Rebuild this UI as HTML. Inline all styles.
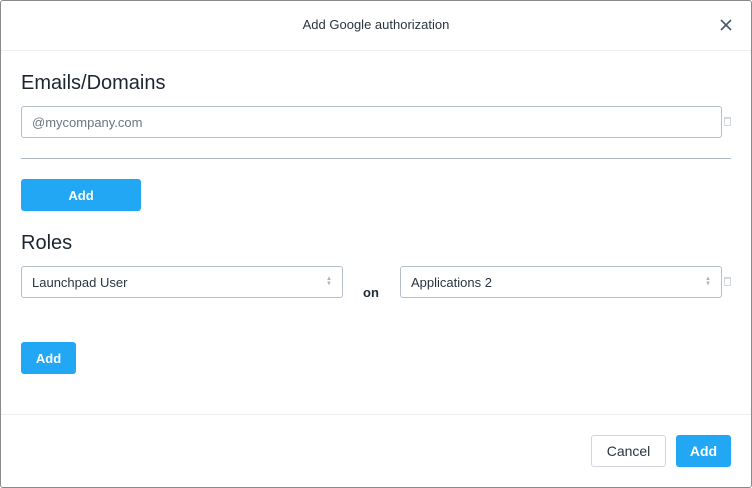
<!DOCTYPE html>
<html><head><style>
*{box-sizing:border-box;margin:0;padding:0}
body{width:752px;height:488px;background:#fff;font-family:"Liberation Sans",sans-serif;color:#1f2a36;position:relative;overflow:hidden}
.frame{position:absolute;left:0;top:0;width:752px;height:488px;border:1px solid #8a8a8a;border-radius:3px}
.a{position:absolute}
.hd{left:1px;top:50px;width:750px;height:1px;background:#eceff2}
.ft{left:1px;top:414px;width:750px;height:1px;background:#eceff2}
.title{left:0;width:752px;top:17px;text-align:center;font-size:13px;color:#2b3540}
h2{position:absolute;font-weight:normal;font-size:20px;color:#1c2530}
.inp{border:1px solid #b5bfca;border-radius:3px;font-size:13px;padding-left:10px;display:flex;align-items:center}
.btn{background:#22a7f5;color:#fff;font-weight:bold;font-size:13px;border-radius:3px;display:flex;align-items:center;justify-content:center}
.arr{position:absolute;right:10px;top:10px;font-size:6px;color:#aab3bc;line-height:5px}
.trash{width:7px;height:9px;border:1px solid #d3d8dd;border-top-width:2px}
</style></head><body>
<div class="frame"></div>
<div class="a title">Add Google authorization</div>
<svg class="a" style="left:720px;top:19px" width="12" height="12" viewBox="0 0 12 12"><path d="M1 1L11 11M11 1L1 11" stroke="#4a5866" stroke-width="1.6" fill="none"/></svg>
<div class="a hd"></div>
<h2 style="left:21px;top:72px">Emails/Domains</h2>
<div class="a inp" style="left:21px;top:106px;width:701px;height:32px;color:#6b7682">@mycompany.com</div>
<div class="a trash" style="left:724px;top:117px"></div>
<div class="a" style="left:21px;top:158px;width:710px;height:1px;background:#aeb8c3"></div>
<div class="a btn" style="left:21px;top:179px;width:120px;height:32px">Add</div>
<h2 style="left:21px;top:232px">Roles</h2>
<div class="a inp" style="left:21px;top:266px;width:322px;height:32px;color:#2a3440">Launchpad User<div class="arr">▲<br>▼</div></div>
<div class="a" style="left:363px;top:285px;font-size:13px;font-weight:bold">on</div>
<div class="a inp" style="left:400px;top:266px;width:322px;height:32px;color:#2a3440">Applications 2<div class="arr">▲<br>▼</div></div>
<div class="a trash" style="left:724px;top:277px"></div>
<div class="a btn" style="left:21px;top:342px;width:55px;height:32px">Add</div>
<div class="a ft"></div>
<div class="a" style="left:591px;top:435px;width:75px;height:32px;border:1px solid #d0d6dc;border-radius:3px;font-size:14px;display:flex;align-items:center;justify-content:center;color:#2a3440">Cancel</div>
<div class="a btn" style="left:676px;top:435px;width:55px;height:32px;font-size:14px">Add</div>
</body></html>
